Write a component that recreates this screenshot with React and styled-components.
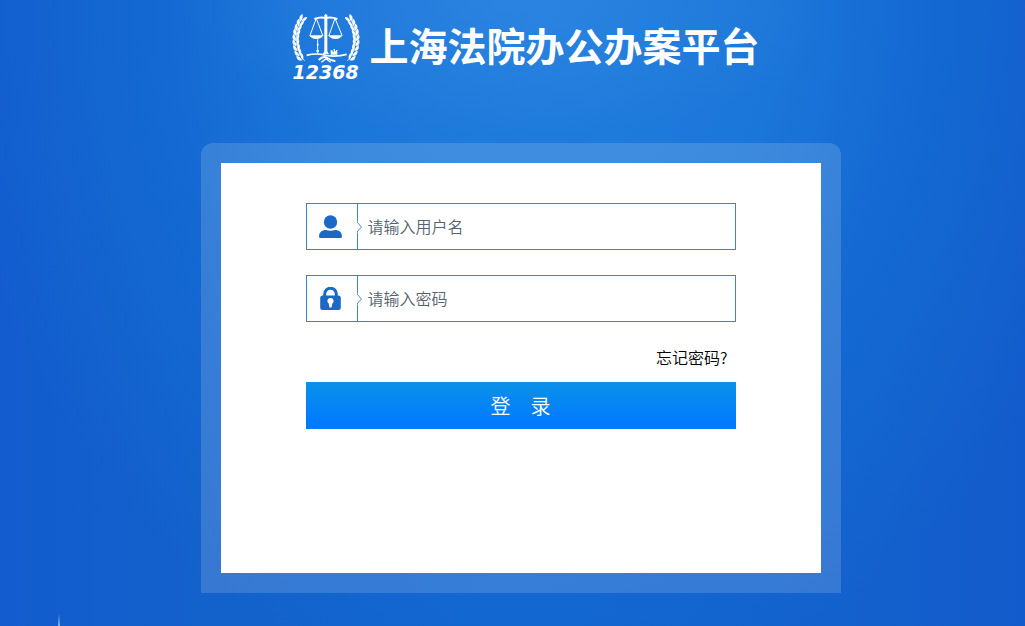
import { useState } from 'react';
import styled, { createGlobalStyle } from 'styled-components';

const GlobalStyle = createGlobalStyle`
  * {
    box-sizing: border-box;
  }
  body {
    margin: 0;
    font-family: 'Noto Sans CJK SC', 'Noto Sans', sans-serif;
    background: #125ecd;
  }
`;

const Page = styled.div`
  position: relative;
  display: flex;
  flex-direction: column;
  align-items: center;
  min-height: 100vh;
  padding: 12px 0 32px 16px;
  overflow: hidden;
  background:
    radial-gradient(ellipse 32% 22% at 50% 0, #3a8ce466, #3a8ce400),
    radial-gradient(ellipse 58% 110% at 53% 2%, #217edd, #1b76d9 40%, #146bd3cc 65%, #125ecd00),
    linear-gradient(to right, #125ccf, #1361cb 20%, #1266cf 50%, #1361cc 82%, #125bcc);
  &::after {
    position: absolute;
    bottom: 0;
    left: 58px;
    content: '';
    width: 2px;
    height: 12px;
    background: linear-gradient(to bottom, #5f9fe800, #7fb4ee);
  }
`;

const Header = styled.header`
  display: flex;
  align-items: flex-start;
  gap: 8px;
  margin-bottom: 61px;
  padding-left: 10px;
  svg {
    flex: none;
  }
`;

const Title = styled.h1`
  margin: 0;
  font-size: 39px;
  font-weight: 700;
  line-height: 64px;
  color: #fff;
`;

const Panel = styled.main`
  width: 100%;
  max-width: 640px;
  padding: 20px;
  border-radius: 12px 12px 0 0;
  background: #ffffff26;
`;

const LoginForm = styled.form`
  display: flex;
  flex-direction: column;
  min-height: 410px;
  padding: 40px 85px;
  background: #fff;
`;

const Field = styled.div`
  display: flex;
  height: 47px;
  margin-bottom: 25px;
  border: 1px solid #3c86c6;
`;

const IconLabel = styled.label`
  position: relative;
  display: flex;
  flex: none;
  align-items: center;
  justify-content: center;
  width: 51px;
  padding-right: 2px;
  border-right: 1px solid #3c86c6;
  .notch {
    position: absolute;
    top: 17px;
    right: -6px;
  }
`;

const Input = styled.input`
  flex: 1;
  min-width: 0;
  padding: 0 10px 2px;
  border: 0;
  outline: 0;
  background: transparent;
  font: 16px/24px 'Noto Sans CJK SC', sans-serif;
  color: #333;
  &::placeholder {
    font-weight: 350;
    color: #56636f;
    opacity: 1;
  }
`;

const ForgotLink = styled.a`
  align-self: flex-end;
  margin-right: 8px;
  margin-bottom: 15px;
  font-size: 16px;
  font-weight: 350;
  line-height: 20px;
  color: #000;
  text-decoration: none;
`;

const SubmitButton = styled.button`
  height: 47px;
  padding: 0;
  border: 0;
  background: linear-gradient(to bottom, #0a92e8, #007bff 85%);
  font: 20px/47px 'Noto Sans CJK SC', sans-serif;
  font-weight: 350;
  color: #fff;
  cursor: pointer;
`;

const LEAVES = [-33, -25, -17, -9, -1, 7, 15, 23, 31];

function Branch() {
  return (
    <g>
      <path d='M66 54A110 110 0 0 0 74 183' fill='none' stroke='#fff' strokeWidth='2' />
      {LEAVES.map((deg) => {
        const rad = (deg * Math.PI) / 180;
        const x = 158 - 110 * Math.cos(rad);
        const y = 119 + 110 * Math.sin(rad);
        return (
          <g key={deg} transform={`translate(${x} ${y}) rotate(${-deg})`} fill='#fff'>
            <path d='M0 6C-13 2 -12 -8 -8 -15Q0 -9 0 6Z' />
            <path d='M1 6C0 -4 3 -13 9 -15Q13 -1 1 6Z' />
          </g>
        );
      })}
    </g>
  );
}

function CourtLogo() {
  return (
    <svg width='70' height='70' viewBox='33 36 210 210' role='img' aria-label='12368'>
      <Branch />
      <g transform='translate(276 0) scale(-1 1)'>
        <Branch />
      </g>
      <g fill='none' stroke='#fff' strokeWidth='3'>
        <path d='M109 55L90 106M109 55L128 106M165 55L147 106M165 55L186 106' />
        <path d='M103 57Q120 50 137 54Q154 50 172 57' strokeWidth='6' />
        <path d='M113 118V162' strokeWidth='3' />
        <path d='M80 166Q108 158 138 166Q168 172 200 163' strokeWidth='5' />
        <path d='M116 180Q130 166 142 174T166 184' strokeWidth='6' />
        <path d='M124 187L138 176L152 187' strokeWidth='4' />
      </g>
      <g fill='#fff'>
        <path d='M133 46L137 41L142 46V162H133Z' />
        <path d='M87 106H131Q124 117 109 117Q94 117 87 106Z' />
        <path d='M144 106H188Q181 117 166 117Q151 117 144 106Z' />
        <path d='M128 162L134 154H141L147 162Z' />
        <path d='M152 164V151H158V156H161V147H165V154H168V150H172V164Z' />
        <circle cx='113' cy='134' r='3' />
        <circle cx='113' cy='153' r='4' />
      </g>
      <text
        x='137'
        y='236'
        textAnchor='middle'
        fill='#fff'
        fontFamily='DejaVu Sans, sans-serif'
        fontSize='57'
        fontWeight='700'
        fontStyle='italic'
      >
        12368
      </text>
    </svg>
  );
}

function Notch() {
  return (
    <svg className='notch' width='7' height='12' viewBox='0 0 7 12'>
      <path d='M0 0H1L6 6L1 12H0Z' fill='#fff' />
      <path d='M1 1L5.5 6L1 11' fill='none' stroke='#4f90d0' />
    </svg>
  );
}

function UserIcon() {
  return (
    <svg width='24' height='24' viewBox='0 0 24 24' fill='#1b69c7'>
      <circle cx='11.5' cy='7' r='6.7' />
      <path d='M0 21.5C0 17 3.5 15 7 15C9.5 16 13.5 16 16 15C19.5 15 23 17 23 21.5Q23 23 21.5 23H1.5Q0 23 0 21.5Z' />
    </svg>
  );
}

function LockIcon() {
  return (
    <svg width='24' height='24' viewBox='0 0 24 24' fill='#1b69c7'>
      <path d='M5.7 10V7A5.8 5.8 0 0 1 17.3 7V10' fill='none' stroke='#1b69c7' strokeWidth='3' />
      <rect x='1.2' y='8.5' width='20.6' height='14.5' rx='2.5' />
      <path d='M11.5 11A3 3 0 0 1 13.3 16.5L12.5 20.5H10.5L9.7 16.5A3 3 0 0 1 11.5 11Z' fill='#fff' />
    </svg>
  );
}

function App() {
  const [username, setUsername] = useState('');
  const [password, setPassword] = useState('');

  return (
    <>
      <GlobalStyle />
      <Page>
        <Header>
          <CourtLogo />
          <Title>上海法院办公办案平台</Title>
        </Header>
        <Panel>
          <LoginForm onSubmit={(e) => e.preventDefault()}>
            <Field>
              <IconLabel htmlFor='username' aria-label='请输入用户名'>
                <UserIcon />
                <Notch />
              </IconLabel>
              <Input
                id='username'
                type='text'
                placeholder='请输入用户名'
                value={username}
                onChange={(e) => setUsername(e.target.value)}
              />
            </Field>
            <Field>
              <IconLabel htmlFor='password' aria-label='请输入密码'>
                <LockIcon />
                <Notch />
              </IconLabel>
              <Input
                id='password'
                type='password'
                placeholder='请输入密码'
                value={password}
                onChange={(e) => setPassword(e.target.value)}
              />
            </Field>
            <ForgotLink href='#'>忘记密码?</ForgotLink>
            <SubmitButton type='submit'>登　录</SubmitButton>
          </LoginForm>
        </Panel>
      </Page>
    </>
  );
}

export default App;
